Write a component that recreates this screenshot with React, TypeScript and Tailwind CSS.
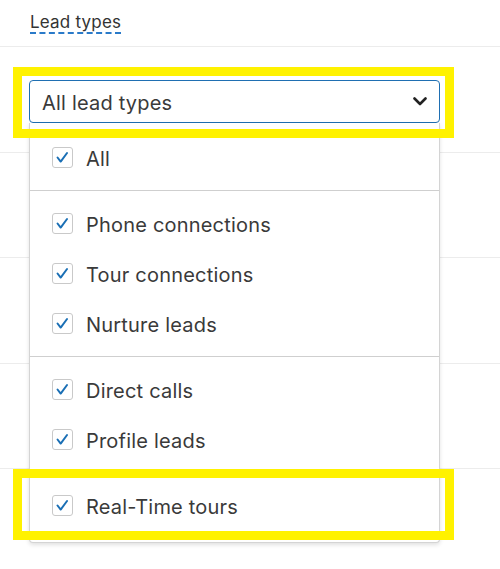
const groups: { items: string[]; pb: string }[] = [
  { items: ["All"], pb: "pb-[8px]" },
  { items: ["Phone connections", "Tour connections", "Nurture leads"], pb: "pb-[8px]" },
  { items: ["Direct calls", "Profile leads"], pb: "pb-[8px]" },
  { items: ["Real-Time tours"], pb: "pb-[12px]" },
];

function Checkbox() {
  return (
    <span className="flex h-[21px] w-[21px] shrink-0 items-center justify-center rounded-[3px] border border-[#c9c9c9] bg-white">
      <svg width="21" height="21" viewBox="0 0 21 21" fill="none">
        <path
          d="M5 10.5 L8.5 15 L15.5 5.5"
          stroke="#1a6fb5"
          strokeWidth="2.2"
          strokeLinecap="round"
          strokeLinejoin="round"
        />
      </svg>
    </span>
  );
}

function Chevron() {
  return (
    <svg width="14" height="9" viewBox="0 0 14 9" fill="none">
      <path d="M1.5 1.5 L7 7 L12.5 1.5" stroke="#222" strokeWidth="2.6" strokeLinecap="round" strokeLinejoin="round" />
    </svg>
  );
}

export default function App() {
  return (
    <div className="relative h-[569px] w-[500px] overflow-hidden bg-white font-['Inter',sans-serif] text-[#3a3a3a]">
      <div className="h-[47px] border-b border-[#ececec] pl-[30px] pt-[10px]">
        <span className="border-b-2 border-dashed border-[#2a7ac9] text-[17px] leading-[20px] tracking-[0.2px] text-[#333]">
          Lead types
        </span>
      </div>

      <div className="h-[105.5px] border-b border-[#ececec] pl-[29px] pt-[33px]">
        <div className="flex h-[43px] w-[411px] items-center justify-between rounded-[4px] border border-[#1f6fb2] pl-[12px] pr-[12px]">
          <span className="pt-[2px] text-[20px] tracking-[0.2px]">All lead types</span>
          <Chevron />
        </div>
      </div>
      <div className="h-[105.5px] border-b border-[#ececec]" />
      <div className="h-[105.5px] border-b border-[#ececec]" />
      <div className="h-[105.5px] border-b border-[#ececec]" />

      <div className="absolute left-[29px] top-[123px] w-[411px] rounded-b-[4px] border-x border-b border-[#d4d4d4] bg-white shadow-[0_2px_4px_rgba(0,0,0,0.12)]">
        {groups.map((g, gi) => (
          <div
            key={gi}
            className={`${gi === 0 ? "pt-[9px]" : "border-t border-[#cfcfcf] pt-[7px]"} ${g.pb}`}
          >
            {g.items.map((item) => (
              <div key={item} className="flex h-[50px] items-center gap-[13px] pl-[22px]">
                <Checkbox />
                <span className="pt-[3px] text-[20px] tracking-[0.2px]">{item}</span>
              </div>
            ))}
          </div>
        ))}
      </div>

      <div className="pointer-events-none absolute left-[13px] top-[67px] h-[71px] w-[441px] border-[9px] border-[#fff200]" />
      <div className="pointer-events-none absolute left-[13px] top-[469px] h-[71px] w-[441px] border-[9px] border-[#fff200]" />
    </div>
  );
}
